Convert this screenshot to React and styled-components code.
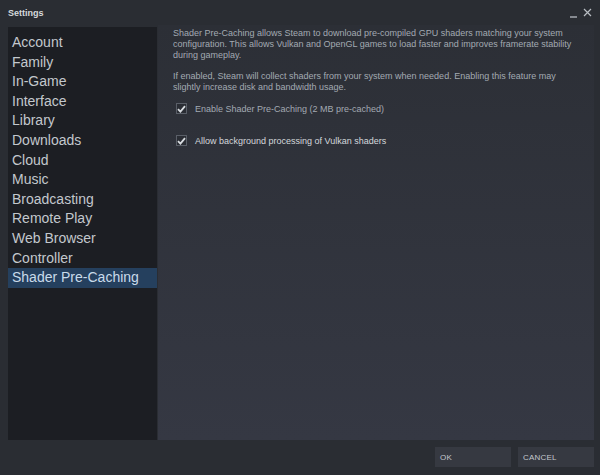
import React from 'react';
import styled, { createGlobalStyle } from 'styled-components';

const GlobalStyle = createGlobalStyle`
  html, body {
    margin: 0;
    padding: 0;
    background: #2a2d33;
  }
  body {
    font-family: "Liberation Sans", Arial, sans-serif;
  }
`;

const Window = styled.div`
  width: 600px;
  height: 475px;
  box-sizing: border-box;
  background: #2a2d33;
  display: flex;
  flex-direction: column;
  padding: 0 6px 0 8px;
`;

const TitleBar = styled.div`
  height: 25px;
  display: flex;
  align-items: center;
  justify-content: space-between;
`;

const Title = styled.div`
  color: #d6d9dd;
  font-size: 9px;
  font-weight: bold;
`;

const WindowControls = styled.div`
  display: flex;
  align-items: center;
  gap: 5px;
  margin-right: 2px;
`;

const Body = styled.div`
  flex: 1;
  display: flex;
  gap: 1px;
  margin-top: 2px;
`;

const Sidebar = styled.nav`
  width: 149px;
  background: #1c1e23;
  display: flex;
  flex-direction: column;
  padding-top: 6px;
`;

const NavItem = styled.div`
  height: 19.6px;
  line-height: 19.6px;
  padding-left: 4px;
  font-size: 14px;
  color: ${p => (p.$active ? '#c9dbea' : '#c3c8cd')};
  background: ${p => (p.$active ? '#25405e' : 'transparent')};
  white-space: nowrap;
`;

const Content = styled.section`
  flex: 1;
  background: linear-gradient(to bottom, #2c2f36, #353843);
  padding: 3px 10px 0 15px;
  margin-top: -2px;
`;

const Paragraph = styled.p`
  margin: 0 0 10px;
  font-size: 9px;
  line-height: 11px;
  color: #a3aab2;
  white-space: nowrap;
`;

const CheckRow = styled.label`
  display: flex;
  align-items: center;
  gap: 8px;
  margin: ${p => p.$top}px 0 0 3px;
  font-size: 9px;
  color: ${p => (p.$bright ? '#d4d8dc' : '#a3aab2')};
`;

const Box = styled.span`
  width: 11px;
  height: 11px;
  box-sizing: border-box;
  border: 1px solid #5a5f68;
  background: #2a2d34;
  display: flex;
  align-items: center;
  justify-content: center;
`;

const Footer = styled.div`
  height: 35px;
  display: flex;
  justify-content: flex-end;
  align-items: flex-start;
  gap: 7px;
  padding-top: 7px;
  box-sizing: border-box;
`;

const Button = styled.button`
  width: 76px;
  height: 20px;
  border: none;
  background: #363941;
  color: #c3c8ce;
  font-family: "Liberation Sans", Arial, sans-serif;
  font-size: 8px;
  text-align: left;
  padding: 0 0 0 5px;
  letter-spacing: 0.2px;
`;

const Check = () => (
  <svg width="9" height="8" viewBox="0 0 9 8">
    <path d="M1 4.2 L3.4 6.6 L8 1.2" fill="none" stroke="#d8dce0" strokeWidth="1.8" />
  </svg>
);

const items = [
  'Account', 'Family', 'In-Game', 'Interface', 'Library', 'Downloads', 'Cloud',
  'Music', 'Broadcasting', 'Remote Play', 'Web Browser', 'Controller', 'Shader Pre-Caching',
];

export default function App() {
  return (
    <>
      <GlobalStyle />
      <Window>
        <TitleBar>
          <Title>Settings</Title>
          <WindowControls>
            <svg width="8" height="10" viewBox="0 0 8 10">
              <path d="M0 9 H7" stroke="#b8bdc3" strokeWidth="1.3" />
            </svg>
            <svg width="9" height="9" viewBox="0 0 9 9">
              <path d="M1 1 L8 8 M8 1 L1 8" stroke="#b8bdc3" strokeWidth="1.2" />
            </svg>
          </WindowControls>
        </TitleBar>
        <Body>
          <Sidebar>
            {items.map(name => (
              <NavItem key={name} $active={name === 'Shader Pre-Caching'}>{name}</NavItem>
            ))}
          </Sidebar>
          <Content>
            <Paragraph>
              Shader Pre-Caching allows Steam to download pre-compiled GPU shaders matching your system<br />
              configuration. This allows Vulkan and OpenGL games to load faster and improves framerate stability<br />
              during gameplay.
            </Paragraph>
            <Paragraph>
              If enabled, Steam will collect shaders from your system when needed. Enabling this feature may<br />
              slightly increase disk and bandwidth usage.
            </Paragraph>
            <CheckRow $top={8}>
              <Box><Check /></Box>
              Enable Shader Pre-Caching (2 MB pre-cached)
            </CheckRow>
            <CheckRow $top={21} $bright>
              <Box><Check /></Box>
              Allow background processing of Vulkan shaders
            </CheckRow>
          </Content>
        </Body>
        <Footer>
          <Button>OK</Button>
          <Button>CANCEL</Button>
        </Footer>
      </Window>
    </>
  );
}
